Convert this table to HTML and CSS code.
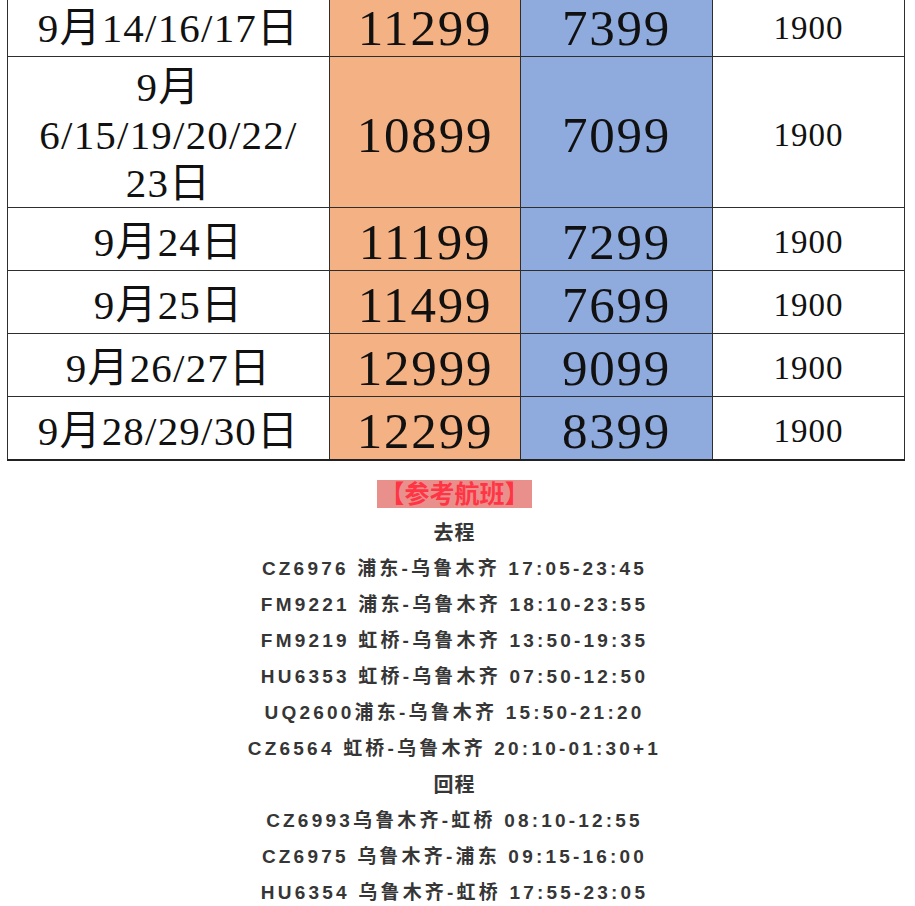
FILE: index.html
```html
<!DOCTYPE html>
<html lang="zh">
<head>
<meta charset="utf-8">
<link rel="stylesheet" href="styles.css">
</head>
<body>
<div class="page">
  <table class="prices">
    <colgroup>
      <col class="c-date"><col class="c-a"><col class="c-b"><col class="c-c">
    </colgroup>
    <tr class="row">
      <td class="date">9月14/16/17日</td>
      <td class="big orange">11299</td>
      <td class="big blue">7399</td>
      <td class="small">1900</td>
    </tr>
    <tr class="row tall">
      <td class="date multi">9月<br>6/15/19/20/22/<br>23日</td>
      <td class="big orange">10899</td>
      <td class="big blue">7099</td>
      <td class="small">1900</td>
    </tr>
    <tr class="row">
      <td class="date">9月24日</td>
      <td class="big orange">11199</td>
      <td class="big blue">7299</td>
      <td class="small">1900</td>
    </tr>
    <tr class="row">
      <td class="date">9月25日</td>
      <td class="big orange">11499</td>
      <td class="big blue">7699</td>
      <td class="small">1900</td>
    </tr>
    <tr class="row">
      <td class="date">9月26/27日</td>
      <td class="big orange">12999</td>
      <td class="big blue">9099</td>
      <td class="small">1900</td>
    </tr>
    <tr class="row last">
      <td class="date">9月28/29/30日</td>
      <td class="big orange">12299</td>
      <td class="big blue">8399</td>
      <td class="small">1900</td>
    </tr>
  </table>

  <div class="flights">
    <div class="label"><span>【参考航班】</span></div>
    <p class="line head">去程</p>
    <p class="line">CZ6976 浦东-乌鲁木齐 17:05-23:45</p>
    <p class="line">FM9221 浦东-乌鲁木齐 18:10-23:55</p>
    <p class="line">FM9219 虹桥-乌鲁木齐 13:50-19:35</p>
    <p class="line">HU6353 虹桥-乌鲁木齐 07:50-12:50</p>
    <p class="line">UQ2600浦东-乌鲁木齐 15:50-21:20</p>
    <p class="line">CZ6564 虹桥-乌鲁木齐 20:10-01:30+1</p>
    <p class="line head">回程</p>
    <p class="line">CZ6993乌鲁木齐-虹桥 08:10-12:55</p>
    <p class="line">CZ6975 乌鲁木齐-浦东 09:15-16:00</p>
    <p class="line">HU6354 乌鲁木齐-虹桥 17:55-23:05</p>
  </div>
</div>
</body>
</html>
```
FILE: styles.css
```css
* { box-sizing: border-box; }
html, body { margin: 0; padding: 0; background: #fff; }
body { width: 915px; height: 906px; overflow: hidden; }

.page { padding-left: 7px; }

.prices {
  margin-top: -7px;
  width: 897px;
  border-collapse: collapse;
  table-layout: fixed;
  font-family: "Liberation Serif", "Noto Sans CJK SC", serif;
  color: #111;
}
.c-date { width: 322px; }
.c-a { width: 191px; }
.c-b { width: 192px; }
.c-c { width: 192px; }

.prices td {
  border: 1px solid #2e2e2e;
  text-align: center;
  vertical-align: middle;
  padding: 7px 0 0;
  height: 63px;
}
.prices .tall td { height: 151px; }
.prices .tall td.multi { padding-top: 6px; line-height: 48px; }
.prices .last td { border-bottom: 2px solid #222; }

.date { font-size: 41px; line-height: 49px; letter-spacing: 1.2px; }
.big { font-size: 51px; line-height: 1; letter-spacing: 1.8px; }
.small { font-size: 33px; line-height: 1; letter-spacing: 1px; }

.orange { background: #f4b183; }
.blue { background: #8faadc; }

.flights {
  text-align: center;
  padding-top: 19px;
  padding-right: 6px;
  font-family: "Liberation Sans", "Noto Sans CJK SC", sans-serif;
  font-weight: bold;
  color: #363636;
  margin-left: -7px;
}
.label { height: 28px; margin-bottom: 7px; }
.label span {
  display: inline-block;
  background: #ea908c;
  color: #ff3546;
  font-size: 25px;
  line-height: 28px;
  padding: 0 2px;
  letter-spacing: 0;
}
.line {
  margin: 0;
  font-size: 19px;
  line-height: 36px;
  letter-spacing: 3.2px;
}
.line.head { letter-spacing: 1px; font-size: 20px; }
```
